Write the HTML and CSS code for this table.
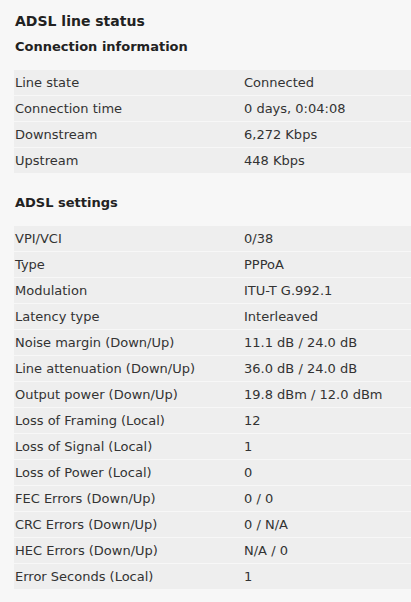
FILE: index.html
```html
<!DOCTYPE html>
<html lang="en">
<head>
  <meta charset="UTF-8">
  <meta name="viewport" content="width=device-width, initial-scale=1.0">
  <title>ADSL line status</title>
  <link rel="stylesheet" href="styles.css">
</head>
<body>
  <div class="content">
    <h1>ADSL line status</h1>

    <!-- Connection information -->
    <h2>Connection information</h2>
    <table class="status-table">
      <tr><td>Line state</td><td>Connected</td></tr>
      <tr><td>Connection time</td><td>0 days, 0:04:08</td></tr>
      <tr><td>Downstream</td><td>6,272 Kbps</td></tr>
      <tr><td>Upstream</td><td>448 Kbps</td></tr>
    </table>

    <!-- ADSL settings -->
    <h2 class="section">ADSL settings</h2>
    <table class="status-table">
      <tr><td>VPI/VCI</td><td>0/38</td></tr>
      <tr><td>Type</td><td>PPPoA</td></tr>
      <tr><td>Modulation</td><td>ITU-T G.992.1</td></tr>
      <tr><td>Latency type</td><td>Interleaved</td></tr>
      <tr><td>Noise margin (Down/Up)</td><td>11.1 dB / 24.0 dB</td></tr>
      <tr><td>Line attenuation (Down/Up)</td><td>36.0 dB / 24.0 dB</td></tr>
      <tr><td>Output power (Down/Up)</td><td>19.8 dBm / 12.0 dBm</td></tr>
      <tr><td>Loss of Framing (Local)</td><td>12</td></tr>
      <tr><td>Loss of Signal (Local)</td><td>1</td></tr>
      <tr><td>Loss of Power (Local)</td><td>0</td></tr>
      <tr><td>FEC Errors (Down/Up)</td><td>0 / 0</td></tr>
      <tr><td>CRC Errors (Down/Up)</td><td>0 / N/A</td></tr>
      <tr><td>HEC Errors (Down/Up)</td><td>N/A / 0</td></tr>
      <tr><td>Error Seconds (Local)</td><td>1</td></tr>
    </table>
  </div>
</body>
</html>
```

FILE: styles.css
```css
/* Base Styling */
* {
  margin: 0;
  padding: 0;
  box-sizing: border-box;
}

body {
  font-family: "DejaVu Sans", Verdana, sans-serif;
  font-size: 13px;
  color: #333;
  background-color: #f7f7f7;
}

.content {
  padding: 11px 0 0 14px;
}

/* Headings */
h1 {
  font-size: 14px;
  line-height: 20px;
  font-weight: bold;
  color: #222;
  padding-left: 1px;
}

h2 {
  font-size: 13px;
  line-height: 20px;
  font-weight: bold;
  color: #222;
  padding-left: 1px;
  margin-top: 6px;
  margin-bottom: 13px;
}

h2.section {
  margin-top: 19px;
}

/* Status tables */
.status-table {
  width: 100%;
  border-collapse: collapse;
}

.status-table td {
  height: 25px;
  line-height: 25px;
  padding: 0 0 0 1px;
  background-color: #eeeeee;
  border-bottom: 1px solid #f7f7f7;
  vertical-align: middle;
  white-space: nowrap;
}

.status-table td:first-child {
  width: 229px;
}
```
